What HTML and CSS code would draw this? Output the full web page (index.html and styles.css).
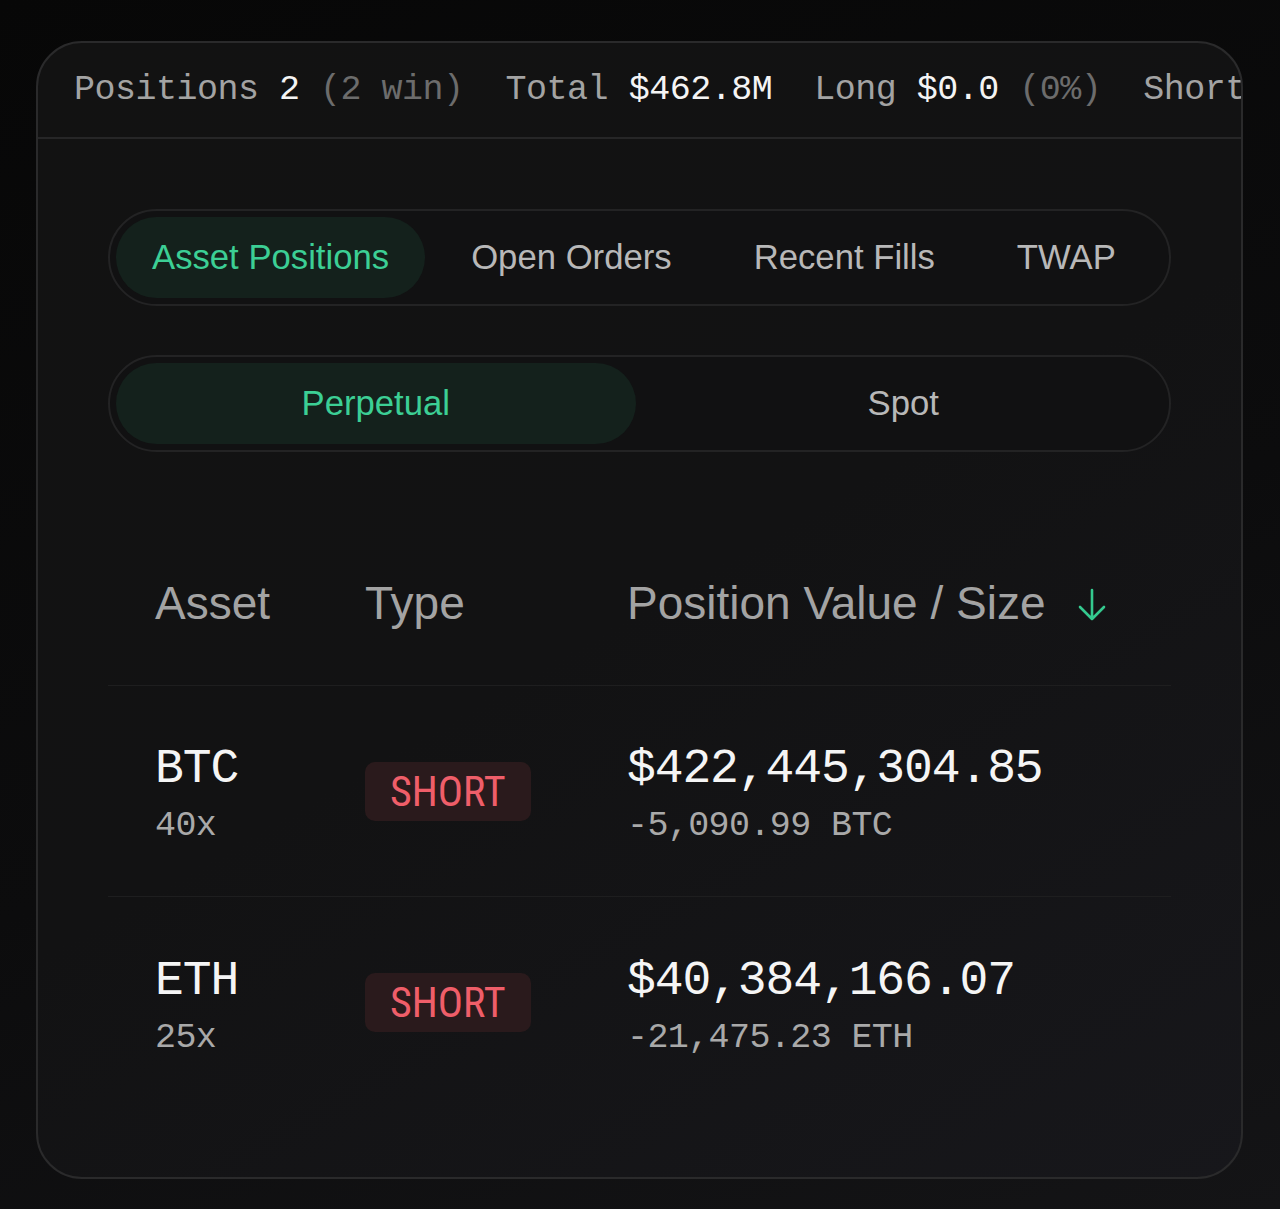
FILE: index.html
```html
<!DOCTYPE html>
<html lang="en">

<head>
  <meta charset="UTF-8">
  <meta name="viewport" content="width=device-width, initial-scale=1.0">
  <title>Positions</title>
  <link rel="stylesheet" href="styles.css">
</head>

<body>
  <div class="card">
    <div class="stats-bar">
      <span class="stat">Positions <b>2</b> <i>(2 win)</i></span>
      <span class="stat">Total <b>$462.8M</b></span>
      <span class="stat">Long <b>$0.0</b> <i>(0%)</i></span>
      <span class="stat">Short <b>$462.8M</b> <i>(100%)</i></span>
    </div>

    <div class="card-body">
      <div class="tabs">
        <div class="tab active">Asset Positions</div>
        <div class="tab">Open Orders</div>
        <div class="tab">Recent Fills</div>
        <div class="tab">TWAP</div>
      </div>

      <div class="segment">
        <div class="segment-item active">Perpetual</div>
        <div class="segment-item">Spot</div>
      </div>

      <div class="positions-table">
        <div class="table-row table-head">
          <div>Asset</div>
          <div>Type</div>
          <div class="sort-col">
            Position Value / Size
            <svg class="sort-icon" width="32" height="36" viewBox="0 0 32 36">
              <path d="M16 3 V32 M4 20 L16 32 L28 20" fill="none" stroke="#34c98f" stroke-width="2.6"
                stroke-linecap="round" stroke-linejoin="round" />
            </svg>
          </div>
        </div>

        <div class="table-row">
          <div class="asset">
            <div class="main">BTC</div>
            <div class="sub">40x</div>
          </div>
          <div><span class="badge short">SHORT</span></div>
          <div class="value">
            <div class="main">$422,445,304.85</div>
            <div class="sub">-5,090.99 BTC</div>
          </div>
        </div>

        <div class="table-row">
          <div class="asset">
            <div class="main">ETH</div>
            <div class="sub">25x</div>
          </div>
          <div><span class="badge short">SHORT</span></div>
          <div class="value">
            <div class="main">$40,384,166.07</div>
            <div class="sub">-21,475.23 ETH</div>
          </div>
        </div>
      </div>
    </div>
  </div>
</body>

</html>
```

FILE: styles.css
```css
body {
  margin: 0;
  padding: 41px 0 30px 36px;
  min-height: 1209px;
  box-sizing: border-box;
  background: linear-gradient(160deg, #070707 0%, #0c0c0d 55%, #141416 100%);
  font-family: "Liberation Sans", Arial, sans-serif;
  color: #f2f2f2;
}

.card {
  width: 1207px;
  height: 1138px;
  box-sizing: border-box;
  border: 2px solid #2a2a2b;
  border-radius: 46px;
  background: linear-gradient(150deg, #121212 0%, #121213 50%, #17171b 100%);
  overflow: hidden;
}

.stats-bar {
  height: 94px;
  display: flex;
  align-items: center;
  padding-left: 36px;
  gap: 42px;
  white-space: nowrap;
  overflow: hidden;
  border-bottom: 2px solid #262627;
  font-family: "Liberation Mono", monospace;
  font-size: 35px;
  letter-spacing: -0.5px;
  color: #a3a3a3;
}

.stat b {
  font-weight: normal;
  color: #f4f4f4;
}

.stat i {
  font-style: normal;
  color: #6c6c6c;
}

.card-body {
  padding: 70px 70px 0;
}

.tabs,
.segment {
  height: 97px;
  box-sizing: border-box;
  padding: 6px;
  border: 2px solid #232324;
  border-radius: 999px;
  background: #111112;
}

.tabs {
  display: flex;
  gap: 10px;
}

.tab {
  display: flex;
  align-items: center;
  padding: 0 36px;
  border-radius: 999px;
  font-size: 34.7px;
  color: #b8b8b8;
}

.tab.active,
.segment-item.active {
  background: #14211c;
  color: #3ccf95;
}

.segment {
  margin-top: 49px;
  display: grid;
  grid-template-columns: 1fr 1fr;
  gap: 8px;
}

.segment-item {
  display: flex;
  align-items: center;
  justify-content: center;
  border-radius: 999px;
  font-size: 34.7px;
  color: #b8b8b8;
}

.positions-table {
  margin-top: 68px;
}

.table-row {
  display: grid;
  grid-template-columns: 210px 262px 1fr;
  align-items: center;
  padding-left: 47px;
  height: 211px;
  box-sizing: border-box;
  border-bottom: 1px solid #1e1e1f;
}

.table-row:last-child {
  border-bottom: none;
}

.table-head {
  height: 166px;
  font-size: 46px;
  color: #a3a3a3;
}

.sort-col {
  display: flex;
  align-items: center;
}

.sort-icon {
  margin-left: 30px;
  margin-top: 4px;
}

.asset,
.value {
  font-family: "Liberation Mono", monospace;
  margin-top: 8px;
}

.main {
  font-size: 48px;
  line-height: 56px;
  letter-spacing: -1.1px;
  color: #f5f5f5;
}

.sub {
  margin-top: 6px;
  font-size: 35px;
  line-height: 46px;
  letter-spacing: -0.6px;
  color: #a9a9a9;
}

.badge {
  display: inline-block;
  padding: 0 25px;
  height: 59px;
  line-height: 59px;
  border-radius: 10px;
  font-family: "Liberation Sans Narrow", "Roboto Condensed", "Liberation Sans", sans-serif;
  font-size: 42px;
}

.badge.short {
  background: #2a1a1c;
  color: #ef5e69;
}
```
